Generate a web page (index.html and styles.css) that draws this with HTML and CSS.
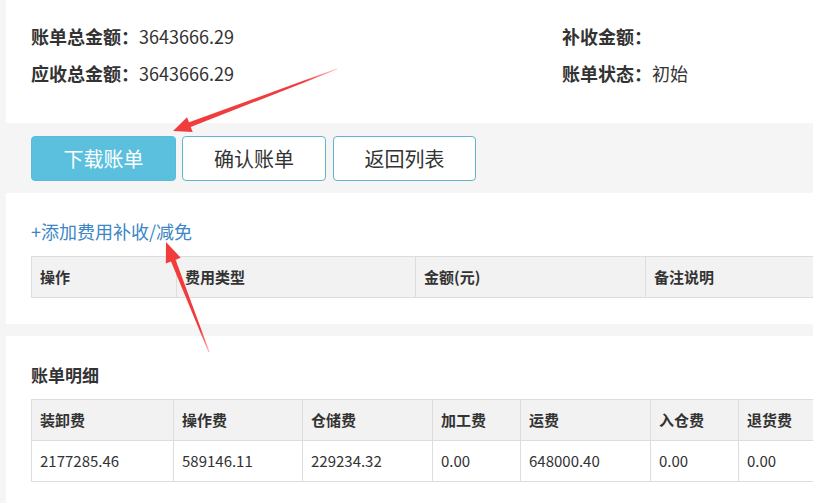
FILE: index.html
```html
<!DOCTYPE html>
<html lang="zh-CN">
<head>
<meta charset="utf-8">
<title>账单详情</title>
<link rel="stylesheet" href="styles.css">
</head>
<body>
<div class="page">
  <section class="panel summary">
    <div class="summary-item"><span class="label">账单总金额：</span>3643666.29</div>
    <div class="summary-item"><span class="label">补收金额：</span></div>
    <div class="summary-item"><span class="label">应收总金额：</span>3643666.29</div>
    <div class="summary-item"><span class="label">账单状态：</span>初始</div>
  </section>

  <div class="actions">
    <button class="btn btn-primary">下载账单</button>
    <button class="btn btn-outline">确认账单</button>
    <button class="btn btn-outline btn-narrow">返回列表</button>
  </div>

  <section class="panel fees">
    <a class="add-link" href="#">+添加费用补收/减免</a>
    <table class="grid grid-fees">
      <colgroup>
        <col class="c145"><col class="c239"><col class="c230"><col class="c300">
      </colgroup>
      <thead>
        <tr><th>操作</th><th>费用类型</th><th>金额(元)</th><th>备注说明</th></tr>
      </thead>
    </table>
  </section>

  <section class="panel detail">
    <h3 class="section-title">账单明细</h3>
    <table class="grid grid-detail">
      <colgroup>
        <col class="c142"><col class="c129"><col class="c130"><col class="c88"><col class="c130"><col class="c88"><col class="c130">
      </colgroup>
      <thead>
        <tr><th>装卸费</th><th>操作费</th><th>仓储费</th><th>加工费</th><th>运费</th><th>入仓费</th><th>退货费</th></tr>
      </thead>
      <tbody>
        <tr><td>2177285.46</td><td>589146.11</td><td>229234.32</td><td>0.00</td><td>648000.40</td><td>0.00</td><td>0.00</td></tr>
      </tbody>
    </table>
  </section>
</div>

<svg class="annotations" width="813" height="503" viewBox="0 0 813 503" aria-hidden="true">
  <defs>
    <linearGradient id="fade1" gradientUnits="userSpaceOnUse" x1="337" y1="69" x2="173" y2="131">
      <stop offset="0" stop-color="#f44" stop-opacity="0.25"/>
      <stop offset="0.2" stop-color="#f03c3c" stop-opacity="1"/>
      <stop offset="1" stop-color="#f03c3c"/>
    </linearGradient>
    <linearGradient id="fade2" gradientUnits="userSpaceOnUse" x1="209" y1="352" x2="166" y2="242">
      <stop offset="0" stop-color="#f44" stop-opacity="0.4"/>
      <stop offset="0.2" stop-color="#f03c3c"/>
      <stop offset="1" stop-color="#f03c3c"/>
    </linearGradient>
  </defs>
  <polygon fill="url(#fade1)" points="173,131 192.7,132.1 190.7,127.0 337.2,69.5 336.8,68.5 189.0,122.3 187.0,117.2"/>
  <polygon fill="url(#fade2)" points="166,242 180.7,257.7 175.6,259.7 209.5,351.8 208.5,352.2 171.0,261.5 165.8,263.5"/>
</svg>
</body>
</html>
```

FILE: styles.css
```css
html, body {
  margin: 0;
  padding: 0;
  overflow: hidden;
}

body {
  background: #f5f5f5;
  font-family: "Noto Sans CJK SC", "Noto Sans", sans-serif;
  color: #333;
  position: relative;
  width: 813px;
  height: 503px;
}

.page {
  margin-left: 6px;
  width: 1100px;
}

.panel {
  background: #fff;
  padding-left: 25px;
  box-sizing: border-box;
}

.summary {
  height: 123px;
  padding-top: 18px;
  display: grid;
  grid-template-columns: 531px auto;
  grid-auto-rows: 37px;
  font-size: 18px;
  line-height: 37px;
}

.summary-item {
  white-space: nowrap;
}

.label {
  font-weight: bold;
}

.actions {
  height: 70px;
  box-sizing: border-box;
  padding: 13px 0 0 25px;
  display: flex;
  gap: 6px;
}

.btn {
  width: 144px;
  height: 45px;
  border-radius: 4px;
  font-family: inherit;
  font-size: 20px;
  line-height: 1;
  padding: 0;
  cursor: pointer;
}

.btn-primary {
  width: 145px;
  background: #5bc0de;
  border: 1px solid #5bbcd9;
  color: #fff;
}

.btn-outline {
  background: #fff;
  border: 1px solid #63b3cd;
  color: #333;
}

.btn-narrow {
  width: 143px;
  margin-left: 1px;
}

.fees {
  height: 131px;
  padding-top: 26px;
}

.add-link {
  display: block;
  font-size: 18px;
  line-height: 24px;
  color: #3b86c6;
  text-decoration: none;
  margin-bottom: 13px;
}

.detail {
  margin-top: 12px;
  padding-top: 27px;
  padding-bottom: 30px;
}

.section-title {
  margin: 0 0 12px;
  font-size: 17px;
  line-height: 24px;
  font-weight: bold;
}

.grid {
  border-collapse: collapse;
  table-layout: fixed;
  font-size: 15px;
}

.grid th,
.grid td {
  border: 1px solid #ddd;
  padding: 10px 8px;
  line-height: 20px;
  text-align: left;
  white-space: nowrap;
  overflow: hidden;
}

.grid th {
  background: #f2f2f2;
  font-weight: bold;
}

.grid-fees { width: 914px; }
.grid-detail { width: 837px; }

.c145 { width: 145px; }
.c239 { width: 239px; }
.c230 { width: 230px; }
.c300 { width: 300px; }
.c142 { width: 142px; }
.c129 { width: 129px; }
.c130 { width: 130px; }
.c88 { width: 88px; }

.annotations {
  position: absolute;
  top: 0;
  left: 0;
  pointer-events: none;
}
```
